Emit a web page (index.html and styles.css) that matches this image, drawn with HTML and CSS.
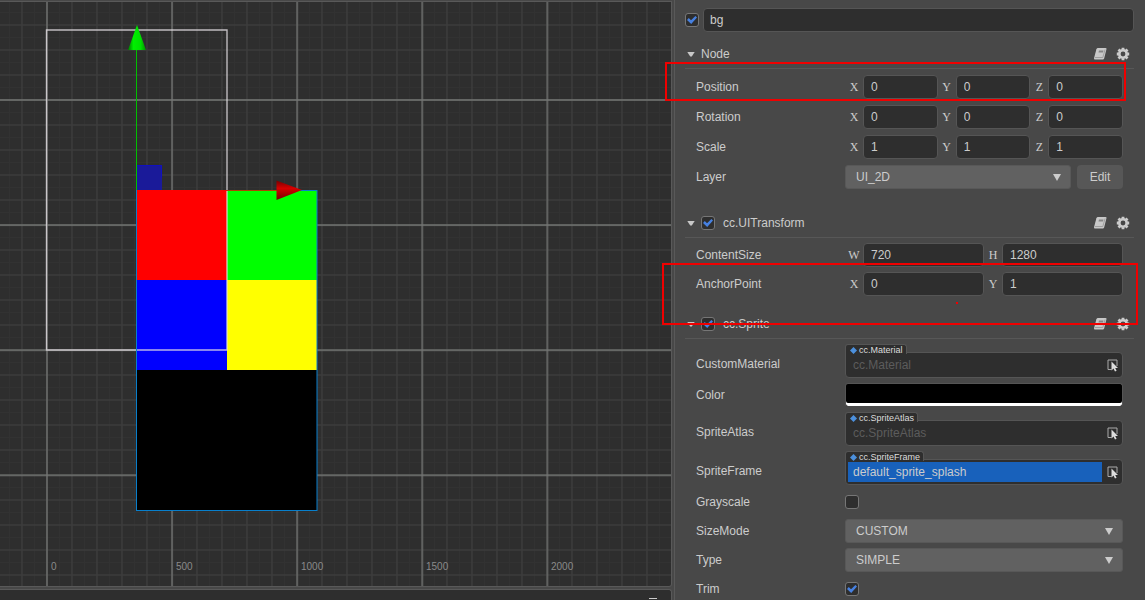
FILE: index.html
```html
<!DOCTYPE html>
<html lang="en">
<head>
<meta charset="utf-8">
<title>Scene editor</title>
<link rel="stylesheet" href="styles.css">
</head>
<body>
<svg class="defs" aria-hidden="true">
  <symbol id="book" viewBox="0 0 14 14">
    <path d="M5 1h7.500q1.200 0 1 1l-2.400 9.500q-.3 1-1.300 1H2q-1.200 0-1-1.200L3.400 2.200Q3.800 1 5 1z" fill="#c8c8c8"/>
    <path d="M6 3.500h4.500l-.5 2H5.500z" fill="#858585"/>
    <path d="M2 10.500h7.800l2.300-8" fill="none" stroke="#8c8c8c" stroke-width=".7"/>
  </symbol>
  <symbol id="gear" viewBox="0 0 14 14">
    <circle cx="7" cy="7" r="3.700" fill="none" stroke="#ccc" stroke-width="2.600"/>
    <path d="M7 .8v2M7 11.200v2M.8 7h2M11.200 7h2M2.500 2.500l1.500 1.500M10 10l1.500 1.500M2.500 11.500l1.500-1.500M10 4l1.500-1.500" stroke="#ccc" stroke-width="2.800"/>
  </symbol>
  <symbol id="pick" viewBox="0 0 12 13">
    <path d="M4.500 10.500h-3.500v-9.500h9v6" fill="none" stroke="#aaa"/>
    <path d="M4.500 2.500v9l2-1.900 1.500 3 1.600-.8-1.400-2.800h2.800z" fill="#ddd"/>
  </symbol>
</svg>
<main class="editor">
  <div class="left">
    <section class="scene" aria-label="Scene view">
      <svg class="canvas">
        <defs>
          <pattern id="fine" x="9" y="12" width="25" height="25" patternUnits="userSpaceOnUse">
            <path d="M0 .5h25M.5 0v25" stroke="#323232"/>
          </pattern>
          <pattern id="minor" x="21" y="24" width="25" height="25" patternUnits="userSpaceOnUse">
            <path d="M0 1h25M1 0v25" stroke="#3c3c3c" stroke-width="1.400"/>
          </pattern>
          <pattern id="major" x="46" y="99" width="125.100" height="125.100" patternUnits="userSpaceOnUse">
            <path d="M0 1h125.100M1 0v125.100" stroke="#747674" stroke-width="1.300"/>
          </pattern>
          <linearGradient id="greenCone"><stop offset="0" stop-color="#007800"/><stop offset=".3" stop-color="#00f000"/><stop offset=".7" stop-color="#00e000"/><stop offset="1" stop-color="#009000"/></linearGradient>
          <linearGradient id="redCone" x2="0" y2="1"><stop offset="0" stop-color="#700"/><stop offset=".4" stop-color="#d80000"/><stop offset="1" stop-color="#700"/></linearGradient>
        </defs>
        <g transform="translate(0 -2)">
          <rect width="100%" height="110%" fill="url(#fine)"/>
          <rect width="100%" height="110%" fill="url(#minor)"/>
          <rect width="100%" height="110%" fill="url(#major)"/>
          <g class="ruler">
            <text x="51" y="570">0</text>
            <text x="176" y="570">500</text>
            <text x="301" y="570">1000</text>
            <text x="426" y="570">1500</text>
            <text x="551" y="570">2000</text>
          </g>
          <rect x="137" y="165" width="25" height="25" fill="#1a1a99"/>
          <path d="M137 165.500h24.500v12" fill="none" stroke="#1010c0"/>
          <g shape-rendering="crispEdges">
            <path d="M137 190h90v90h-90z" fill="#f00"/>
            <path d="M227 190h90v90h-90z" fill="#0f0"/>
            <path d="M137 280h90v90h-90z" fill="#00f"/>
            <path d="M227 280h90v90h-90z" fill="#ff0"/>
            <path d="M137 370h180v140h-180z" fill="#000"/>
          </g>
          <path d="M46.500 350V30H227V350z" fill="none" stroke="#e4dfe4" stroke-opacity=".8" stroke-width="1.400"/>
          <rect x="136.500" y="190.500" width="180.500" height="320" fill="none" stroke="#087fcc"/>
          <path d="M136.500 190V50" stroke="#00c000"/>
          <path d="M137 190.500h90" stroke="#f00"/>
          <path d="M227 190.500h51" stroke="#b04000"/>
          <path d="M137 25l9 25h-18z" fill="url(#greenCone)"/>
          <path d="M276.500 180.500l25.500 9.500-25.500 10z" fill="url(#redCone)"/>
        </g>
      </svg>
    </section>
    <section class="console" aria-label="Console">
      <button class="menu" aria-label="Menu"></button>
    </section>
  </div>

  <form class="inspector">
    <div class="node-name">
      <input type="checkbox" class="check" aria-label="Active" checked>
      <input type="text" class="box" aria-label="Node name" value="bg">
    </div>

    <section class="component">
      <header class="head">
        <span class="caret"></span><h2>Node</h2>
        <button type="button" class="icon" aria-label="Help"><svg><use href="#book"/></svg></button>
        <button type="button" class="icon" aria-label="Settings"><svg><use href="#gear"/></svg></button>
      </header>
      <div class="rows loose">
        <div class="row"><span class="name">Position</span><div class="axes">
          <label>X<input class="box" value="0"></label><label>Y<input class="box" value="0"></label><label>Z<input class="box" value="0"></label></div></div>
        <div class="row"><span class="name">Rotation</span><div class="axes">
          <label>X<input class="box" value="0"></label><label>Y<input class="box" value="0"></label><label>Z<input class="box" value="0"></label></div></div>
        <div class="row"><span class="name">Scale</span><div class="axes">
          <label>X<input class="box" value="1"></label><label>Y<input class="box" value="1"></label><label>Z<input class="box" value="1"></label></div></div>
        <div class="row"><label class="name" for="layer">Layer</label><div class="layer">
          <span class="drop"><select id="layer"><option>UI_2D</option></select></span>
          <button type="button" class="edit">Edit</button></div></div>
      </div>
    </section>

    <section class="component transform">
      <header class="head">
        <span class="caret"></span><input type="checkbox" class="check" id="uit" checked><h2><label for="uit">cc.UITransform</label></h2>
        <button type="button" class="icon" aria-label="Help"><svg><use href="#book"/></svg></button>
        <button type="button" class="icon" aria-label="Settings"><svg><use href="#gear"/></svg></button>
      </header>
      <div class="rows">
        <div class="row"><span class="name">ContentSize</span><div class="axes">
          <label>W<input class="box" value="720"></label><label>H<input class="box" value="1280"></label></div></div>
        <div class="row"><span class="name">AnchorPoint</span><div class="axes">
          <label>X<input class="box" value="0"></label><label>Y<input class="box" value="1"></label></div></div>
      </div>
    </section>

    <section class="component sprite">
      <header class="head">
        <span class="caret"></span><input type="checkbox" class="check" id="spr" checked><h2><label for="spr">cc.Sprite</label></h2>
        <button type="button" class="icon" aria-label="Help"><svg><use href="#book"/></svg></button>
        <button type="button" class="icon" aria-label="Settings"><svg><use href="#gear"/></svg></button>
      </header>
      <div class="rows">
        <div class="row asset-row"><label class="name" for="mat">CustomMaterial</label><div class="asset">
          <span class="tag">cc.Material</span>
          <div class="slot"><input id="mat" placeholder="cc.Material"><button type="button" class="pick" aria-label="Pick material"><svg><use href="#pick"/></svg></button></div></div></div>
        <div class="row"><label class="name" for="color">Color</label><button type="button" class="color" id="color"></button></div>
        <div class="row asset-row"><label class="name" for="atlas">SpriteAtlas</label><div class="asset">
          <span class="tag">cc.SpriteAtlas</span>
          <div class="slot"><input id="atlas" placeholder="cc.SpriteAtlas"><button type="button" class="pick" aria-label="Pick atlas"><svg><use href="#pick"/></svg></button></div></div></div>
        <div class="row asset-row"><label class="name" for="frame">SpriteFrame</label><div class="asset">
          <span class="tag">cc.SpriteFrame</span>
          <div class="slot"><input id="frame" class="filled" value="default_sprite_splash"><button type="button" class="pick" aria-label="Pick frame"><svg><use href="#pick"/></svg></button></div></div></div>
        <div class="row"><label class="name" for="gray">Grayscale</label><input type="checkbox" class="check" id="gray"></div>
        <div class="row"><label class="name" for="mode">SizeMode</label><span class="drop"><select id="mode"><option>CUSTOM</option></select></span></div>
        <div class="row"><label class="name" for="type">Type</label><span class="drop"><select id="type"><option>SIMPLE</option></select></span></div>
        <div class="row"><label class="name" for="trim">Trim</label><input type="checkbox" class="check" id="trim" checked></div>
      </div>
    </section>
    <div class="mark mark-position"></div>
    <div class="mark mark-anchor"></div>
    <div class="dot"></div>
  </form>
</main>
</body>
</html>
```
FILE: styles.css
```css
* { box-sizing: border-box; }
body {
  margin: 0;
  background: #484848;
  color: #cccccc;
  font: 12px/16px "Liberation Sans", Arial, sans-serif;
}
input, select, button { font: inherit; color: inherit; margin: 0; }
button { padding: 0; border: 0; background: none; }
.defs { display: none; }

.editor {
  display: grid;
  grid-template-columns: minmax(0, 672fr) minmax(0, 471fr);
  column-gap: 2px;
  height: 100vh;
  overflow: hidden;
}
.left { display: flex; flex-direction: column; gap: 2px; padding-top: 1px; }
.scene {
  flex: 1;
  min-height: 0;
  border: 1px solid #595959;
  border-left: 0;
  border-radius: 0 0 3px 0;
  background: #2e2e2e;
  overflow: hidden;
}
.canvas { display: block; width: 100%; height: 100%; }
.ruler text { font-size: 10px; fill: #8a8a8a; }
.console {
  display: flex;
  justify-content: flex-end;
  height: 12px;
  padding: 8px 14px 0 0;
  border: 1px solid #595959;
  border-width: 1px 1px 0 0;
  border-radius: 0 3px 0 0;
  background: #2e2e2e;
}
.menu { width: 8px; height: 3px; border-top: 1px solid #ccc; border-bottom: 1px solid #999; }

.inspector {
  position: relative;
  padding: 8px 11px 0 10px;
  border-left: 1px solid #595959;
}
.node-name { display: flex; align-items: center; gap: 4px; margin-bottom: 8px; }
.box {
  flex: 1;
  min-width: 0;
  width: 100%;
  height: 24px;
  padding: 0 7px;
  border: 1px solid #555;
  border-radius: 4px;
  background: #2e2e2e;
  font: 12px/16px "Liberation Sans", Arial, sans-serif;
}
.node-name .box { padding: 0 6px; }
.check {
  appearance: none;
  flex: none;
  display: grid;
  place-items: center;
  width: 14px;
  height: 14px;
  border: 1px solid #767676;
  border-radius: 3px;
  background: #2e2e2e;
}
.check:checked::before {
  content: "";
  width: 10px;
  height: 8px;
  background: #4680e0;
  clip-path: polygon(0 50%, 18% 25%, 40% 52%, 84% 0, 100% 20%, 42% 100%);
}

.head {
  display: flex;
  align-items: center;
  height: 29px;
  border-bottom: 1px solid #575757;
}
.head h2 { flex: 1; margin: 0; font: inherit; }
.caret {
  width: 8px;
  height: 5px;
  margin: 0 6px 0 2px;
  background: #c8c8c8;
  clip-path: polygon(0 0, 100% 0, 60% 100%, 40% 100%);
}
.head .check + h2 { padding-left: 8px; }
.icon { width: 14px; height: 14px; margin-right: 9px; }
.icon:last-child { margin-right: 4px; }
.icon svg { display: block; width: 14px; height: 14px; }
.transform { margin-top: 20px; }
.sprite { margin-top: 14px; }

.rows { display: grid; gap: 5px; padding: 5px 11px 0; }
.rows.loose { gap: 6px; padding-top: 6px; }
.row {
  display: grid;
  grid-template-columns: 149px minmax(0, 1fr);
  align-items: center;
  min-height: 24px;
}
.axes { display: flex; }
.axes label {
  flex: 1;
  display: grid;
  grid-template-columns: 18px minmax(0, 1fr);
  align-items: center;
  text-align: center;
  font: 12px/16px "Liberation Serif", serif;
}
.axes .box { text-align: left; }
.layer { display: flex; gap: 6px; }
.drop { position: relative; flex: 1; display: block; }
.drop select {
  appearance: none;
  display: block;
  width: 100%;
  height: 24px;
  padding: 0 10px;
  border: 1px solid #585858;
  border-radius: 3px;
  background: #616161;
}
.drop::after {
  content: "";
  position: absolute;
  right: 10px;
  top: 9px;
  width: 8px;
  height: 7px;
  background: #ccc;
  clip-path: polygon(0 0, 100% 0, 50% 100%);
  pointer-events: none;
}
.edit { width: 46px; height: 24px; border-radius: 4px; background: #575757; }

.asset-row .name { padding-top: 5px; }
.asset { display: flex; flex-direction: column; align-items: flex-start; }
.tag {
  z-index: 1;
  display: flex;
  align-items: center;
  gap: 2px;
  height: 10px;
  margin-bottom: -2px;
  padding: 2px 3px 0 4px;
  border: 1px solid #555;
  border-bottom: 0;
  border-radius: 3px 3px 0 0;
  background: #2e2e2e;
  color: #ddd;
  font-size: 9px;
  line-height: 9px;
}
.tag::before {
  content: "";
  width: 7px;
  height: 7px;
  background: #4c90dd;
  clip-path: polygon(50% 0, 100% 50%, 50% 100%, 0 50%);
}
.slot {
  display: flex;
  align-items: center;
  width: 100%;
  height: 26px;
  padding: 0 3px 0 2px;
  border: 1px solid #555;
  border-radius: 0 4px 4px 4px;
  background: #2e2e2e;
}
.slot input {
  flex: 1;
  min-width: 0;
  height: 20px;
  padding: 0 5px;
  border: 0;
  background: none;
}
.slot input::placeholder { color: #5c5c5c; opacity: 1; }
.slot .filled { background: #1861bb; }
.pick { width: 12px; height: 13px; margin-left: 5px; }
.pick svg { display: block; width: 12px; height: 13px; }
.color {
  height: 24px;
  border: 1px solid #555;
  border-bottom-color: #484848;
  border-radius: 3px;
  background: #000;
  box-shadow: inset 0 -3px #fff;
}

/* Annotation frames drawn over the panel */
.mark { position: absolute; border: 2px solid #f00000; pointer-events: none; }
.mark-position { left: -10px; right: 19px; top: 62px; height: 39px; }
.mark-anchor { left: -13px; right: 7px; top: 263px; height: 62px; }
.dot { position: absolute; left: 281px; top: 302px; width: 2px; height: 2px; background: #f00000; }
```
